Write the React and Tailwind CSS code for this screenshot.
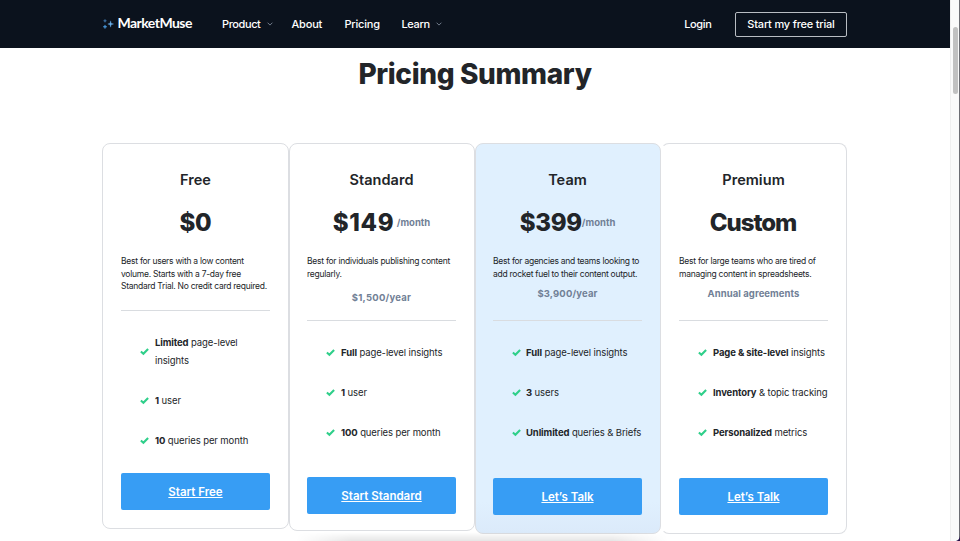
import React from "react";

function Check() {
  return (
    <svg viewBox="0 0 9 8" className="h-2 w-[9px] shrink-0 overflow-visible">
      <path d="M.9 3.5 3.4 5.8 8.1 1" fill="none" stroke="#2fcf8a" strokeWidth="2.1" />
    </svg>
  );
}

function Chevron() {
  return (
    <svg viewBox="0 0 6 4" className="h-1 w-1.5 shrink-0 overflow-visible">
      <path d="M.6 .7 3 3.1 5.4 .7" fill="none" stroke="#7d8796" strokeWidth=".9" />
    </svg>
  );
}

function Logo() {
  return (
    <div className="flex items-center">
      <svg viewBox="0 0 11 10" className="h-[10px] w-[11px]">
        <path d="M7.6 1.8 8.2 4.3 10.6 5 8.2 5.7 7.6 8.2 7 5.7 4.8 5 7 4.3Z" fill="#6ab0ee" stroke="#6ab0ee" strokeWidth=".3" />
        <path d="M2 .2 2.5 1.4 3.6 1.8 2.5 2.2 2 3.4 1.5 2.2 .4 1.8 1.5 1.4Z" fill="#4a86bd" stroke="#4a86bd" strokeWidth=".3" />
        <path d="M2 5.9 2.6 7.3 4 7.8 2.6 8.3 2 9.7 1.4 8.3 0 7.8 1.4 7.3Z" fill="#4b9fe6" stroke="#4b9fe6" strokeWidth=".4" />
      </svg>
      <span className="ml-[3.5px] -translate-y-px font-[Lato] text-[14px] leading-none font-bold tracking-[-0.53px]">MarketMuse</span>
    </div>
  );
}

function Header() {
  return (
    <header className="flex h-12 shrink-0 items-center bg-[#0b121d] pr-[103px] pl-[103px] text-[11px] font-medium tracking-[-0.2px] whitespace-nowrap text-white">
      <div className="w-[119px]"><Logo /></div>
      <div className="flex w-[69.5px] items-center justify-between pr-[19px]">
        <span className="tracking-[-0.4px]">Product</span>
        <Chevron />
      </div>
      <div className="w-[53px]">About</div>
      <div className="w-[57px]">Pricing</div>
      <div className="flex w-[40px] items-center justify-between">
        <span className="tracking-[-0.35px]">Learn</span>
        <Chevron />
      </div>
      <div className="mr-[23.5px] ml-auto tracking-[-0.35px]">Login</div>
      <div className="flex h-[25px] w-[112px] items-center justify-center rounded-[2px] border border-[#b9bdc3]">Start my free trial</div>
    </header>
  );
}

const plans = [
  {
    name: "Free",
    price: "$0",
    priceClass: "tracking-[-0.3px]",
    copy: ["Best for users with a low content", "volume. Starts with a 7-day free", "Standard Trial. No credit card required."],
    features: [["Limited", "page-level insights"], ["1", "user"], ["10", "queries per month"]],
    cta: "Start Free",
    card: "w-[187px] h-[386px] pl-[18px] bg-white",
    summary: "h-[55px]",
    list: "h-[162px]",
    gap: "gap-[6px]",
  },
  {
    name: "Standard",
    price: "$149",
    priceClass: "tracking-[0.65px]",
    unit: "/month",
    unitClass: "ml-[2.5px]",
    copy: ["Best for individuals publishing content", "regularly."],
    yearly: "$1,500/year",
    yearlyClass: "mt-[12px] tracking-[0.25px]",
    features: [["Full", "page-level insights"], ["1", "user"], ["100", "queries per month"]],
    cta: "Start Standard",
    card: "w-[186px] h-[388px] pl-[17px] bg-white",
    summary: "h-[65px]",
    list: "h-[156px]",
    gap: "gap-[6px]",
  },
  {
    name: "Team",
    price: "$399",
    priceClass: "tracking-[-0.3px]",
    unit: "/month",
    copy: ["Best for agencies and teams looking to", "add rocket fuel to their content output."],
    yearly: "$3,900/year",
    yearlyClass: "mt-[8px] tracking-[0.15px]",
    features: [["Full", "page-level insights"], ["3", "users"], ["Unlimited", "queries & Briefs"]],
    cta: "Let’s Talk",
    card: "w-[186px] h-[391px] pl-[17px] bg-[#e0f0fe] bg-linear-to-t from-[#dbeafa] to-[#e0f0fe] to-8%",
    summary: "h-[65px]",
    list: "h-[157px]",
    gap: "gap-[5px]",
  },
  {
    name: "Premium",
    price: "Custom",
    priceClass: "tracking-[-1.05px] -ml-px",
    copy: ["Best for large teams who are tired of", "managing content in spreadsheets."],
    yearly: "Annual agreements",
    yearlyClass: "mt-[8px] tracking-[0.08px]",
    features: [["Page & site-level", "insights"], ["Inventory", "& topic tracking"], ["Personalized", "metrics"]],
    cta: "Let’s Talk",
    card: "w-[186px] h-[391px] pl-[17px] bg-white border-l-transparent",
    summary: "h-[65px]",
    list: "h-[157px]",
    gap: "gap-[6px]",
  },
];

function Plan({ plan }) {
  return (
    <article className={`rounded-[8px] border border-[#dcdee2] pt-[25px] ${plan.card}`}>
      <div className="w-[149px]">
        <h2 className="text-center text-[14.5px] leading-[21px] font-semibold tracking-[0.05px]">{plan.name}</h2>
        <div className="mt-[17px] flex h-8 items-center justify-center leading-none">
          <span className={`text-[24px] font-extrabold ${plan.priceClass}`}>{plan.price}</span>
          {plan.unit && <span className={`text-[9.5px] font-bold text-[#718096] ${plan.unitClass || ""}`}>{plan.unit}</span>}
        </div>
        <div className={`mt-[16px] border-b border-[#d9dce0] box-content text-[8.5px] leading-[12.6px] whitespace-nowrap ${plan.summary}`}>
          {plan.copy.map((line) => <p key={line} className="tracking-[-0.26px]">{line}</p>)}
          {plan.yearly && <p className={`text-center text-[9.5px] font-bold text-[#718096] ${plan.yearlyClass}`}>{plan.yearly}</p>}
        </div>
        <ul className={`flex flex-col gap-[22px] pt-[23px] pl-[19px] text-[9.5px] leading-[18px] tracking-[-0.11px] ${plan.list}`}>
          {plan.features.map(([strong, rest]) => (
            <li key={strong} className={`flex items-center ${plan.gap}`}>
              <Check />
              <span className={strong === "Limited" ? "w-[96px]" : "whitespace-nowrap"}><b>{strong}</b> {rest}</span>
            </li>
          ))}
        </ul>
        <a className="flex h-[37px] items-center justify-center rounded-[2px] bg-[#379df4] pt-[2px] text-[11.5px] font-semibold text-white underline">{plan.cta}</a>
      </div>
    </article>
  );
}

export default function App() {
  return (
    <div className="relative flex h-[541px] w-[960px] overflow-hidden bg-white font-[Inter,sans-serif] text-[#222529]">
      <div className="flex w-[950px] flex-col">
        <Header />
        <h1 className="mt-[8px] h-[87px] text-center text-[28px] leading-[36px] font-extrabold tracking-[-0.36px]">Pricing Summary</h1>
        <main className="flex items-start pl-[102px]">
          {plans.map((plan) => <Plan key={plan.name} plan={plan} />)}
        </main>
      </div>
      <div className="z-10 flex w-[10px] justify-center border-r border-l border-r-[#6c6d73] border-l-[#efefef] bg-[#fafafa] pt-[27px]">
        <div className="h-[67px] w-[5px] rounded-full bg-[#c1c1c1]" />
      </div>
      <svg viewBox="0 0 5 5" className="absolute right-0 bottom-0 z-20 h-[5px] w-[5px]">
        <path d="M5 0Q4.5 4 1 5H5Z" fill="#25104a" />
      </svg>
      <div className="absolute bottom-0 left-[296px] h-[9px] w-[372px] bg-linear-to-t from-black/10 to-transparent mask-x-from-85% mask-x-to-100%" />
    </div>
  );
}
